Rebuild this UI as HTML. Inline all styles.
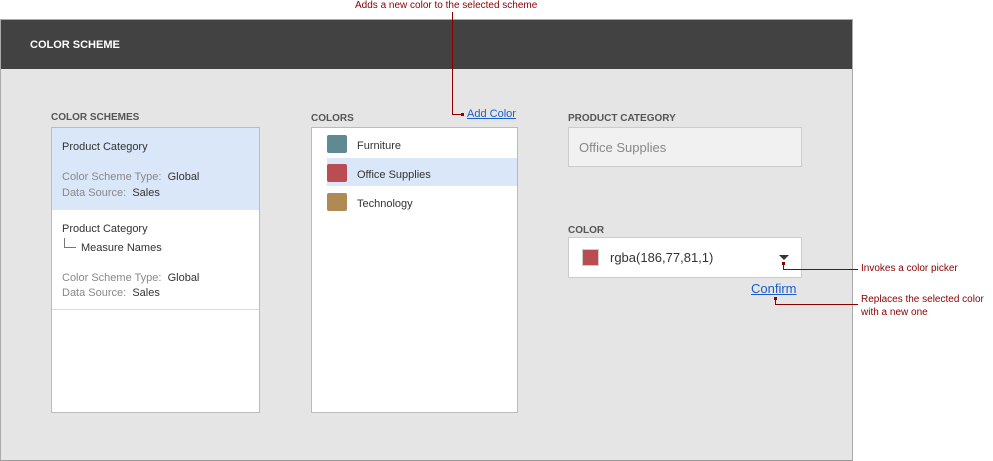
<!DOCTYPE html>
<html><head><style>
*{margin:0;padding:0;box-sizing:border-box}
body{width:993px;height:461px;background:#fff;font-family:"Liberation Sans",sans-serif;position:relative;overflow:hidden;color:#333}
.a{position:absolute;white-space:nowrap}
.lbl{font-size:10px;font-weight:bold;color:#555}
.t{font-size:11px;color:#333}
.g{color:#888}
.red{color:#8b0000;font-size:10px}
.ln{position:absolute;background:#8b0000}
.dot{position:absolute;width:4px;height:4px;background:#8b0000}
.link{color:#1a5dc9;text-decoration:underline}
</style></head><body>
<div class="a" style="left:0;top:19px;width:853px;height:442px;background:#e5e5e5;border:1px solid #aaa;border-bottom:1px solid #999"></div>
<div class="a" style="left:1px;top:20px;width:851px;height:49px;background:#424242"></div>
<div class="a" style="left:30px;top:39px;color:#fff;font-size:11px;font-weight:bold">COLOR SCHEME</div>

<div class="a lbl" style="left:51px;top:112px">COLOR SCHEMES</div>
<div class="a" style="left:51px;top:127px;width:209px;height:286px;background:#fff;border:1px solid #bbb"></div>
<div class="a" style="left:52px;top:128px;width:207px;height:82px;background:#d9e7f8"></div>
<div class="a t" style="left:62px;top:141px">Product Category</div>
<div class="a t" style="left:62px;top:171px"><span class="g">Color Scheme Type:</span>&nbsp; Global</div>
<div class="a t" style="left:62px;top:187px"><span class="g">Data Source:</span>&nbsp; Sales</div>
<div class="a t" style="left:62px;top:223px">Product Category</div>
<div class="a" style="left:64px;top:238px;width:12px;height:10px;border-left:1px solid #777;border-bottom:1px solid #777"></div>
<div class="a t" style="left:81px;top:242px">Measure Names</div>
<div class="a t" style="left:62px;top:272px"><span class="g">Color Scheme Type:</span>&nbsp; Global</div>
<div class="a t" style="left:62px;top:287px"><span class="g">Data Source:</span>&nbsp; Sales</div>
<div class="a" style="left:52px;top:309px;width:207px;height:1px;background:#ddd"></div>

<div class="a lbl" style="left:311px;top:113px">COLORS</div>
<div class="a" style="left:311px;top:127px;width:207px;height:286px;background:#fff;border:1px solid #bbb"></div>
<div class="a" style="left:327px;top:158px;width:190px;height:28px;background:#d9e7f8"></div>
<div class="a" style="left:327px;top:135px;width:20px;height:18px;background:#5f8a93;border-radius:2px"></div>
<div class="a t" style="left:357px;top:140px">Furniture</div>
<div class="a" style="left:327px;top:164px;width:20px;height:18px;background:#ba4d51;border-radius:2px"></div>
<div class="a t" style="left:357px;top:169px">Office Supplies</div>
<div class="a" style="left:327px;top:193px;width:20px;height:18px;background:#b08a54;border-radius:2px"></div>
<div class="a t" style="left:357px;top:198px">Technology</div>
<div class="a link" style="left:467px;top:108px;font-size:11px">Add Color</div>

<div class="a lbl" style="left:568px;top:113px">PRODUCT CATEGORY</div>
<div class="a" style="left:568px;top:127px;width:234px;height:40px;background:#f1f1f1;border:1px solid #ccc"></div>
<div class="a" style="left:579px;top:140px;font-size:13px;color:#888">Office Supplies</div>
<div class="a lbl" style="left:568px;top:225px">COLOR</div>
<div class="a" style="left:568px;top:237px;width:234px;height:41px;background:#fff;border:1px solid #ccc"></div>
<div class="a" style="left:582px;top:249px;width:17px;height:17px;background:#ba4d51;border:1px solid #ccc"></div>
<div class="a" style="left:610px;top:250px;font-size:13px;color:#333">rgba(186,77,81,1)</div>
<div class="a" style="left:779px;top:255px;width:0;height:0;border-left:5px solid transparent;border-right:5px solid transparent;border-top:5px solid #333"></div>
<div class="a link" style="left:751px;top:281px;font-size:13px">Confirm</div>

<div class="a red" style="left:355px;top:0px">Adds a new color to the selected scheme</div>
<div class="ln" style="left:452px;top:12px;width:1px;height:103px"></div>
<div class="ln" style="left:452px;top:114px;width:12px;height:1px"></div>
<div class="dot" style="left:461px;top:113px;width:3px;height:3px"></div>
<div class="ln" style="left:783px;top:262px;width:1px;height:7px"></div>
<div class="dot" style="left:782px;top:262px;width:3px;height:3px"></div>
<div class="ln" style="left:783px;top:269px;width:75px;height:1px"></div>
<div class="a red" style="left:861px;top:263px">Invokes a color picker</div>
<div class="ln" style="left:775px;top:298px;width:1px;height:7px"></div>
<div class="dot" style="left:774px;top:297px;width:3px;height:3px"></div>
<div class="ln" style="left:775px;top:304px;width:83px;height:1px"></div>
<div class="a red" style="left:861px;top:293px;line-height:13px">Replaces the selected color<br>with a new one</div>
</body></html>
